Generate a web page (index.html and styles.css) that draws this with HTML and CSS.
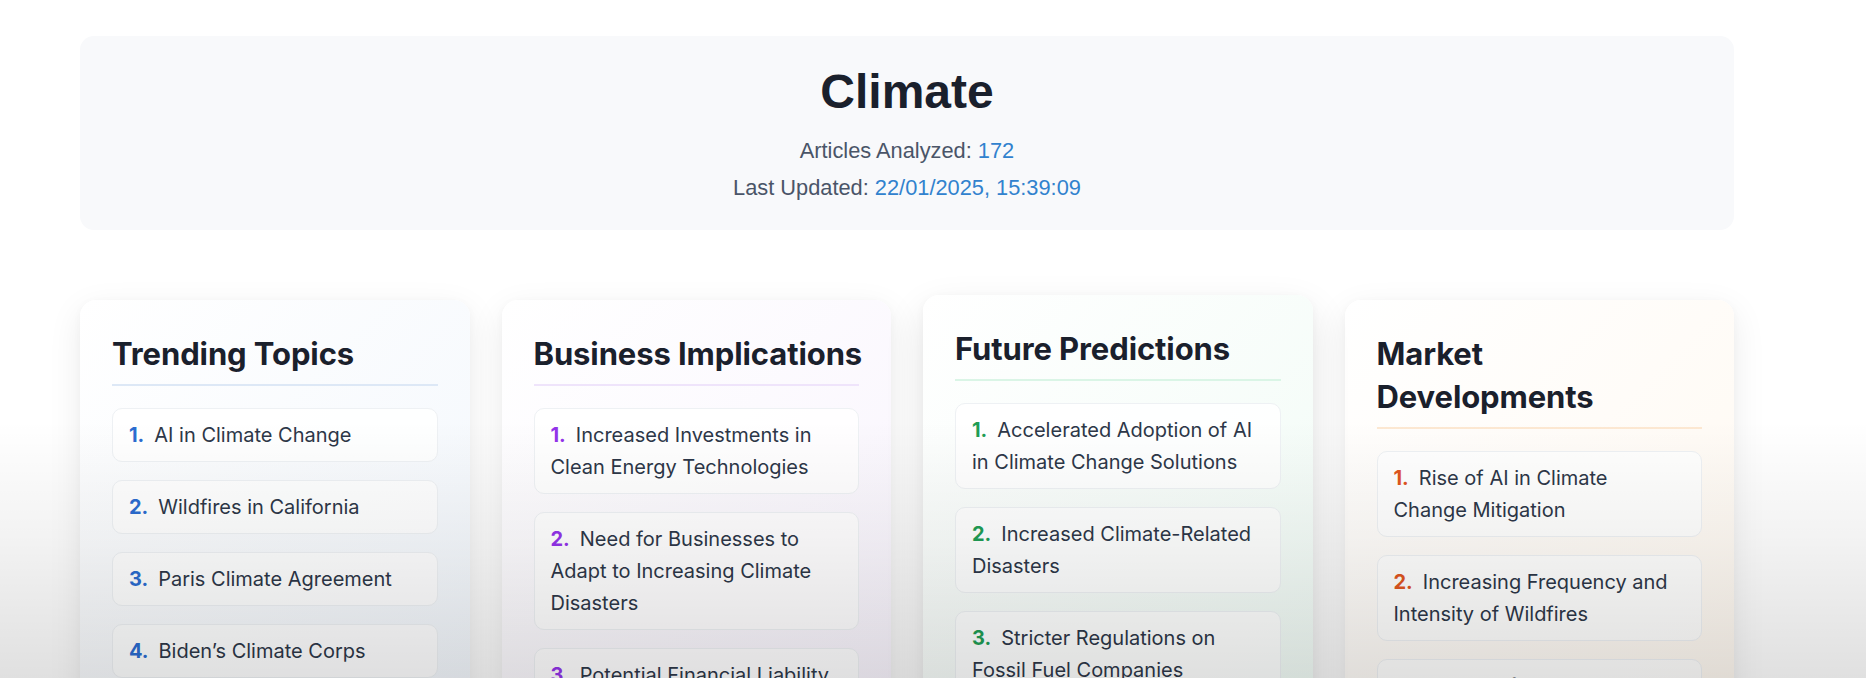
FILE: index.html
```html
<!DOCTYPE html>
<html lang="en">
<head>
<meta charset="utf-8">
<title>Climate</title>
<link rel="stylesheet" href="styles.css">
</head>
<body>
<main class="page">
  <header class="hero">
    <h1 class="hero-title">Climate</h1>
    <p class="hero-meta">Articles Analyzed: <span class="hero-value">172</span></p>
    <p class="hero-meta">Last Updated: <span class="hero-value">22/01/2025, 15:39:09</span></p>
  </header>

  <section class="grid">
    <article class="card card-blue">
      <h2 class="card-title">Trending Topics</h2>
      <ol class="items">
        <li class="item"><span class="num">1.</span>AI in Climate Change</li>
        <li class="item"><span class="num">2.</span>Wildfires in California</li>
        <li class="item"><span class="num">3.</span>Paris Climate Agreement</li>
        <li class="item"><span class="num">4.</span>Biden’s Climate Corps</li>
        <li class="item"><span class="num">5.</span>Clean Energy Transition</li>
      </ol>
    </article>

    <article class="card card-purple">
      <h2 class="card-title card-title-single">Business Implications</h2>
      <ol class="items">
        <li class="item"><span class="num">1.</span>Increased Investments in Clean Energy Technologies</li>
        <li class="item"><span class="num">2.</span>Need for Businesses to Adapt to Increasing Climate Disasters</li>
        <li class="item"><span class="num">3.</span>Potential Financial Liability for Climate-Related Damages</li>
      </ol>
    </article>

    <article class="card card-green card-raised">
      <h2 class="card-title">Future Predictions</h2>
      <ol class="items">
        <li class="item"><span class="num">1.</span>Accelerated Adoption of AI in Climate Change Solutions</li>
        <li class="item"><span class="num">2.</span>Increased Climate-Related Disasters</li>
        <li class="item"><span class="num">3.</span>Stricter Regulations on Fossil Fuel Companies</li>
      </ol>
    </article>

    <article class="card card-orange">
      <h2 class="card-title">Market Developments</h2>
      <ol class="items">
        <li class="item"><span class="num">1.</span>Rise of AI in Climate Change Mitigation</li>
        <li class="item"><span class="num">2.</span>Increasing Frequency and Intensity of Wildfires</li>
        <li class="item"><span class="num">3.</span>Growth of Climate Tech Startups</li>
      </ol>
    </article>
  </section>
</main>
<div class="fade"></div>
</body>
</html>
```

FILE: styles.css
```css
* {
  box-sizing: border-box;
}

html, body {
  margin: 0;
  padding: 0;
  height: 678px;
  overflow: hidden;
  background: #ffffff;
}

body {
  position: relative;
  font-family: "Inter", "Noto Sans", sans-serif;
  color: #2d3748;
}

.page {
  width: 1654px;
  margin: 0 0 0 80px;
  padding-top: 36px;
}

.hero {
  background: #f8f9fb;
  border-radius: 14px;
  padding: 32px 32px 26px;
  text-align: center;
  font-family: "Liberation Sans", Arial, sans-serif;
}

.hero-title {
  margin: 0 0 18px;
  font-size: 48px;
  line-height: 1;
  font-weight: 700;
  color: #1a202c;
}

.hero-meta {
  margin: 0;
  font-size: 21.8px;
  line-height: 33px;
  color: #4a5568;
}

.hero-meta + .hero-meta {
  margin-top: 4px;
}

.hero-value {
  color: #3182ce;
}

.grid {
  margin-top: 70px;
  display: grid;
  grid-template-columns: repeat(4, minmax(0, 1fr));
  gap: 32px;
  align-items: start;
}

.card {
  border-radius: 16px;
  padding: 32px;
  box-shadow: 0 10px 34px rgba(0, 0, 0, 0.08), 0 2px 8px rgba(0, 0, 0, 0.03);
  min-height: 420px;
}

.card-raised {
  transform: translateY(-5px);
  box-shadow: 0 16px 40px rgba(0, 0, 0, 0.11), 0 3px 10px rgba(0, 0, 0, 0.04);
}

.card-blue { background: linear-gradient(135deg, #ffffff 0%, #f1f6fc 100%); }
.card-purple { background: linear-gradient(135deg, #ffffff 0%, #f8f3fd 100%); }
.card-green { background: linear-gradient(135deg, #ffffff 0%, #f0fbf5 100%); }
.card-orange { background: linear-gradient(135deg, #ffffff 0%, #fff8ef 100%); }

.card-title {
  margin: 0 0 22px;
  padding-bottom: 9px;
  font-size: 31px;
  line-height: 43px;
  font-weight: 700;
  letter-spacing: -0.1px;
  color: #1a202c;
  border-bottom: 2px solid #dde8f6;
}

.card-title-single {
  white-space: nowrap;
}

.card-purple .card-title { border-bottom-color: #efe4fb; }
.card-green .card-title { border-bottom-color: #daf5e6; }
.card-orange .card-title { border-bottom-color: #fde8d2; }

.items {
  list-style: none;
  margin: 0;
  padding: 0;
  display: flex;
  flex-direction: column;
  gap: 18px;
}

.item {
  background: rgba(255, 255, 255, 0.85);
  border: 1px solid #eef1f4;
  border-radius: 10px;
  padding: 10px 16px;
  font-size: 20px;
  line-height: 32px;
  color: #2d3748;
}

.num {
  font-weight: 700;
  margin-right: 10px;
}

.card-blue .num { color: #2b6cd0; }
.card-purple .num { color: #9333ea; }
.card-green .num { color: #1f9d55; }
.card-orange .num { color: #e0561f; }

.fade {
  position: absolute;
  left: 0;
  top: 0;
  width: 100%;
  height: 678px;
  pointer-events: none;
  background: linear-gradient(to bottom, rgba(0, 0, 0, 0) 0%, rgba(0, 0, 0, 0) 62%, rgba(0, 0, 0, 0.05) 80%, rgba(0, 0, 0, 0.12) 100%);
}
```
